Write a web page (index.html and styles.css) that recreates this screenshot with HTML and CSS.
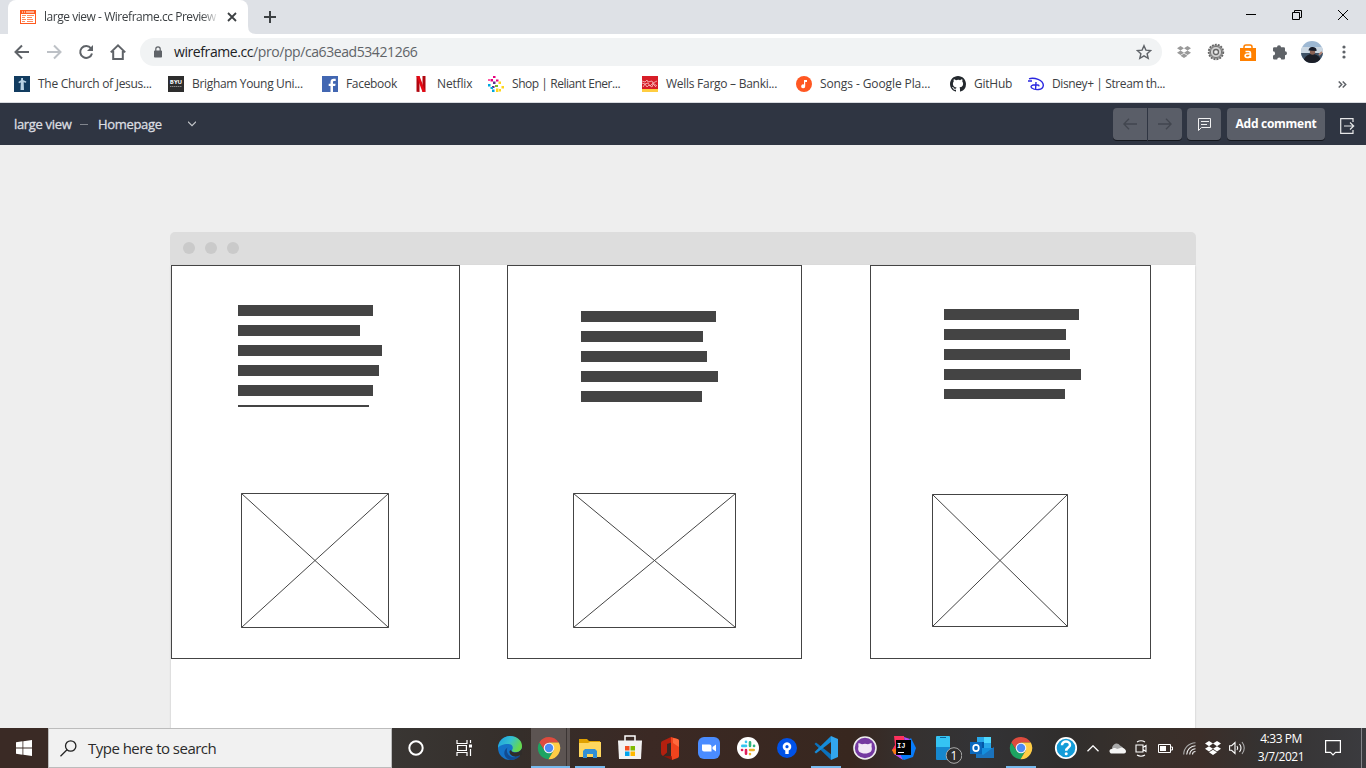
FILE: index.html
```html
<!DOCTYPE html>
<html lang="en">
<head>
<meta charset="utf-8">
<title>large view - Wireframe.cc Preview</title>
<link rel="stylesheet" href="styles.css">
</head>
<body>
<svg class="defs" width="0" height="0" aria-hidden="true">
  <symbol id="chrome" viewBox="0 0 24 24">
    <path fill="#dd4b3e" d="M12 6.600h9.700A11.200 11.200 0 0 0 2.300 6.400l5.200 8.300z"/>
    <path fill="#1da462" d="M2.300 6.400a11.200 11.200 0 0 0 9.200 16.800l5-8.500-8.900 0z"/>
    <path fill="#ffcd46" d="M21.800 6.600H12l4.700 8-5.200 8.600A11.200 11.200 0 0 0 21.800 6.600z"/>
    <circle cx="12" cy="12" r="5.300" fill="#f4f4f4"/><circle cx="12" cy="12" r="4.200" fill="#4c8bf5"/>
  </symbol>
  <symbol id="dropbox" viewBox="0 0 16 14">
    <path d="M4 0 8 2.600 4 5.200 0 2.600zM12 0l4 2.600-4 2.600-4-2.600zM4 5.200l4 2.600-4 2.600-4-2.600zM12 5.200l4 2.600-4 2.600-4-2.600zM8 8.700l4 2.600L8 13.900l-4-2.600z"/>
  </symbol>
</svg>

<header class="tabs">
  <div class="tab">
    <svg width="16" height="14" viewBox="0 0 16 14"><path fill="#ff5a1f" d="M0 0h16v14H0z"/><path fill="#fff" d="M1 4h14v9H1zM2 1.500h1v1H2zM4 1.500h1v1H4zM6 1.500h8v1H6z"/><path stroke="#ff8a5c" d="M2 5.500h4M7 5.500h7M2 7.500h3M7 7.500h5M2 9.500h4M7 9.500h6M2 11.500h3M7 11.500h6"/></svg>
    <span class="tab-title">large view - Wireframe.cc Preview</span>
    <svg width="10" height="10" viewBox="0 0 10 10" stroke="#3c4043" stroke-width="1.800"><path d="m1 1 8 8M9 1 1 9"/></svg>
  </div>
  <svg class="tab-foot" width="8" height="8" viewBox="0 0 8 8"><path fill="#fff" d="M0 0v8h8Q0 8 0 0z"/></svg>
  <svg class="new-tab" width="12" height="12" viewBox="0 0 12 12" stroke="#3c4043" stroke-width="2"><path d="M6 0v12M0 6h12"/></svg>
  <div class="window-controls">
    <svg width="10" height="11" viewBox="0 0 10 11" stroke="#000"><path d="M0 5.500h10"/></svg>
    <svg width="10" height="10" viewBox="0 0 10 10" fill="none" stroke="#000"><path d="M.5 2.500h7v7h-7zM2.500 2V.5h7v7H8"/></svg>
    <svg width="10" height="10" viewBox="0 0 10 10" stroke="#000"><path d="m0 0 10 10M10 0 0 10"/></svg>
  </div>
</header>

<nav class="toolbar">
  <div class="nav-icons">
    <svg width="16" height="16" viewBox="0 0 16 16" fill="none" stroke="#5f6368" stroke-width="2"><path d="M15 8H2.500M8 1.500 1.500 8 8 14.500"/></svg>
    <svg width="16" height="16" viewBox="0 0 16 16" fill="none" stroke="#bdc1c6" stroke-width="2"><path d="M1 8h12.500M8 1.500 14.500 8 8 14.500"/></svg>
    <svg width="16" height="16" viewBox="0 0 16 16" fill="none" stroke="#5f6368" stroke-width="2"><path d="M13 4.300A6 6 0 1 0 14 9.500"/><path fill="#5f6368" stroke="none" d="M15 1v6H9z"/></svg>
    <svg width="16" height="16" viewBox="0 0 16 16" fill="none" stroke="#5f6368" stroke-width="2"><path d="M.8 8.400 8 1.400l7.200 7M3.200 7v8h9.600V7"/></svg>
  </div>
  <div class="address">
    <svg class="lock" width="8" height="12" viewBox="0 0 8 12"><path fill="#5f6368" d="M.8 4.500h6.400a.8.800 0 0 1 .8.800v5.400a.8.800 0 0 1-.8.800H.800a.8.800 0 0 1-.8-.8V5.300a.8.800 0 0 1 .8-.8z"/><path fill="none" stroke="#5f6368" stroke-width="1.200" d="M1.800 5V3a2.200 2.200 0 0 1 4.400 0v2"/></svg>
    <span class="url">wireframe.cc<span class="path">/pro/pp/ca63ead53421266</span></span>
    <svg class="star" width="16" height="16" viewBox="0 0 16 16" fill="none" stroke="#5f6368" stroke-width="1.400"><path d="m8 1.700 1.900 4.400 4.800.4-3.600 3.200 1.100 4.700L8 11.900l-4.200 2.500 1.100-4.700L1.300 6.500l4.800-.4z"/></svg>
  </div>
  <div class="extensions">
    <span><svg width="14" height="14" fill="#999"><use href="#dropbox"/></svg></span>
    <span><svg width="18" height="18" viewBox="0 0 18 18"><circle cx="9" cy="9" r="7.300" fill="#aaa" stroke="#666" stroke-width="1.800" stroke-dasharray="1.900 1.100"/><circle cx="9" cy="9" r="5.600" fill="#d0d0d0" stroke="#777"/><circle cx="9" cy="9" r="2.500" fill="#eee" stroke="#666" stroke-width="1.300"/></svg></span>
    <span><svg width="16" height="17" viewBox="0 0 16 17"><path fill="#ff8000" d="M0 4h16v13H0z"/><path fill="none" stroke="#ff8000" stroke-width="1.500" d="M4 5V3q0-2 2-2h4q2 0 2 2v2"/><path fill="none" stroke="#fff" stroke-width="1.700" d="M5.500 7.500h3.400q1.500 0 1.500 1.500v5M10 10H7.200C4.500 10 4.500 13.500 7 13.500c2 0 3.200-1 3.200-2"/></svg></span>
    <span><svg width="16" height="16" viewBox="0 0 16 16"><path fill="#5f6368" d="M5 3.200a2 2 0 1 1 4 0h2.800A1.200 1.200 0 0 1 13 4.400v2.900a2 2 0 1 1 0 4v2.900a1.300 1.300 0 0 1-1.300 1.300H9.200a2 2 0 0 0-4 0H2.300A1.300 1.300 0 0 1 1 14.200v-2.700a2.100 2.100 0 0 0 0-4.200V4.400a1.200 1.200 0 0 1 1.200-1.200z"/></svg></span>
    <span><svg width="22" height="22" viewBox="0 0 22 22"><defs><clipPath id="av"><circle cx="11" cy="11" r="11"/></clipPath></defs><g clip-path="url(#av)"><path fill="#9db8d3" d="M0 0h22v22H0z"/><path fill="#cbd7e2" d="M0 6h22v6H0z"/><path fill="#3f5266" d="M0 12h22v10H0z"/><path fill="#1b1e27" d="M3 22v-4q3-5 8-5t8 4l1 5z"/><circle cx="11.500" cy="11" r="2.700" fill="#8a6254"/><path fill="#171b28" d="M7.500 9.500Q8 5.500 12 6t3.500 4z"/><path stroke="#b58676" stroke-width="2" d="m18 14 3-3"/></g></svg></span>
    <span><svg width="4" height="14" viewBox="0 0 4 14" fill="#5f6368"><circle cx="2" cy="2" r="1.600"/><circle cx="2" cy="7" r="1.600"/><circle cx="2" cy="12" r="1.600"/></svg></span>
  </div>
</nav>

<nav class="bookmarks">
  <a class="bm church"><svg width="16" height="16" viewBox="0 0 16 16"><path fill="#123c60" d="M0 0h16v16H0z"/><path fill="#b9d2e4" d="M7.200 2H9v2l3.300 1.500-.3 1.300-2.300-.5.3 7.700H6.500l.3-7.500-1.700.8-.8-1.200L7 4.200z"/></svg><span>The Church of Jesus...</span></a>
  <a class="bm brigham"><svg width="16" height="16" viewBox="0 0 16 16"><path fill="#2d2d2d" d="M0 0h16v16H0z"/><text class="byu" x="8" y="8" text-anchor="middle">BYU</text><path stroke="#888" stroke-dasharray="1.500 .5" d="M2 10.500h12"/></svg><span>Brigham Young Uni...</span></a>
  <a class="bm facebook"><svg width="16" height="16" viewBox="0 0 16 16"><path fill="#4267b2" d="M0 0h16v16H0z"/><path fill="#fff" d="M8.500 16v-6H6.700V7.700h1.800V6c0-2.200 1.300-3.200 3.200-3.200h2V5h-1.300C11.300 5 11 5.500 11 6.300v1.400h2.600l-.4 2.300H11v6z"/></svg><span>Facebook</span></a>
  <a class="bm netflix"><svg width="16" height="16" viewBox="0 0 16 16"><path fill="#b1060f" d="M3.500 0h3v16l-3-.2zM9.500 0h3v15.800L9.500 16z"/><path fill="#e50914" d="M3.500 0h3l6 15.800-3 .2z"/></svg><span>Netflix</span></a>
  <a class="bm reliant"><svg width="16" height="16" viewBox="0 0 16 16"><path fill="#e6007e" d="M5 0h2.500v2H5zM2.500 3H5v2.500H2.500zM8 3.500h2.500v2H8z"/><path fill="#ff5aa5" d="M0 3h2v2H0z"/><path fill="#5b2d90" d="M5 5.500h2.500V8H5zM4 10h2.500v2H4z"/><path fill="#ffd51c" d="M10.500 5.500H13V8h-2.500zM13.500 10H16v2.500h-2.500zM8 12.500h2.500V16H8zM11 13h2v2.500h-2z"/><path fill="#00a8df" d="M0 8h2.500v2.500H0zM2.500 11H5v2H2.500zM4 13.500h2.500V16H4z"/><path fill="#7ab82c" d="M7 9h3v2H7z"/></svg><span>Shop | Reliant Ener...</span></a>
  <a class="bm wells"><svg width="16" height="16" viewBox="0 0 16 16"><path fill="#d71e28" d="M0 0h16v13H0z"/><path fill="#ffcd41" d="M0 13h16v3H0z"/><path fill="none" stroke="#f2b1b2" stroke-width=".9" d="m0 5 3 1 2-2 1 2 4-1 1 2 4-2M0 7l3 1 3-1 2 3 3-3 4 3M1 11l2-3 2 3 2-2 3 2 1-3 3 3"/></svg><span>Wells Fargo – Banki...</span></a>
  <a class="bm songs"><svg width="16" height="16" viewBox="0 0 16 16"><circle cx="8" cy="8" r="8" fill="#ff5722"/><path fill="#fff" d="M8 4h3v2H9.200v4.200A2 2 0 1 1 8 8.500z"/></svg><span>Songs - Google Pla...</span></a>
  <a class="bm github"><svg width="16" height="16" viewBox="0 0 16 16"><path fill="#24292e" d="M8 0C3.580 0 0 3.580 0 8c0 3.540 2.290 6.530 5.470 7.590.4.070.55-.17.55-.38 0-.19-.01-.82-.01-1.490-2.010.37-2.530-.49-2.690-.94-.09-.23-.48-.94-.82-1.130-.28-.15-.68-.52-.01-.53.63-.01 1.080.58 1.230.82.72 1.210 1.870.87 2.330.66.070-.52.28-.87.51-1.070-1.780-.2-3.640-.89-3.640-3.950 0-.87.31-1.590.82-2.150-.08-.2-.36-1.020.08-2.120 0 0 .67-.21 2.200.82A7.600 7.600 0 0 1 8 3.860c.68 0 1.360.09 2 .27 1.530-1.040 2.200-.82 2.200-.82.44 1.100.16 1.920.08 2.120.51.56.82 1.270.82 2.150 0 3.070-1.870 3.750-3.650 3.950.29.25.54.73.54 1.480 0 1.070-.01 1.930-.01 2.200 0 .21.15.46.55.38A8 8 0 0 0 16 8c0-4.420-3.580-8-8-8z"/></svg><span>GitHub</span></a>
  <a class="bm disney"><svg width="16" height="16" viewBox="0 0 16 16" fill="none" stroke="#2a27e0" stroke-width="1.400"><path d="M0 5h4M1 2.800C6 1 15.500 4 15.300 9.500 15 14.500 7 14.500 3.800 12c-2-1.800.2-3 3.700-3.200 3-.1 4 .6 3 1.400M8 6 7.600 13"/></svg><span>Disney+ | Stream th...</span></a>
  <svg class="more" width="9" height="7" viewBox="0 0 9 7" fill="none" stroke="#5f6368" stroke-width="1.500"><path d="m.7.500 3 3-3 3M4.700.500l3 3-3 3"/></svg>
</nav>

<div class="appbar">
  <span class="project">large view</span>
  <span class="dash"></span>
  <span class="page-name">Homepage</span>
  <svg class="caret" width="8" height="6" viewBox="0 0 8 6" fill="none" stroke="#c8cacd" stroke-width="1.100"><path d="m0 .7 4 4 4-4"/></svg>
  <div class="actions">
    <button class="btn prev"><svg width="14" height="12" viewBox="0 0 14 12" fill="none" stroke="#42464f" stroke-width="1.300"><path d="M14 6H1M6 .7.800 6 6 11.300"/></svg></button>
    <button class="btn next"><svg width="14" height="12" viewBox="0 0 14 12" fill="none" stroke="#42464f" stroke-width="1.300"><path d="M0 6h13M8 .7 13.200 6 8 11.300"/></svg></button>
    <button class="btn notes"><svg width="13" height="13" viewBox="0 0 13 13" fill="none" stroke="#f0f0f1"><path d="M.5.500h12v9h-9l-3 3zM3 3.500h8M3 6.500h6"/></svg></button>
    <button class="btn add">Add comment</button>
    <svg class="exit" width="15" height="16" viewBox="0 0 15 16" fill="none" stroke="#e6e7e8" stroke-width="1.200"><path d="M13 4V.7H.7v14.600H13V12M4 8h9.500M10 4.500 13.700 8 10 11.500"/></svg>
  </div>
</div>

<main class="stage">
  <div class="mock">
    <div class="mock-head"><i></i><i></i><i></i></div>
    <div class="mock-page">
      <section class="frame f1">
        <div class="lines"><b style="width:135px"></b><b style="width:122px"></b><b style="width:144px"></b><b style="width:141px"></b><b style="width:135px"></b><b style="width:131px"></b></div>
        <svg class="placeholder" width="148" height="135" viewBox="0 0 148 135"><path d="M.5.500h147v134H.500zM.5.500l147 134M147.500.500.500 134.500"/></svg>
      </section>
      <section class="frame f2">
        <div class="lines"><b style="width:135px"></b><b style="width:122px"></b><b style="width:126px"></b><b style="width:137px"></b><b style="width:121px"></b></div>
        <svg class="placeholder" width="163" height="135" viewBox="0 0 163 135"><path d="M.5.500h162v134H.500zM.5.500l162 134M162.500.500.500 134.500"/></svg>
      </section>
      <section class="frame f3">
        <div class="lines"><b style="width:135px"></b><b style="width:122px"></b><b style="width:126px"></b><b style="width:137px"></b><b style="width:121px"></b></div>
        <svg class="placeholder" width="136" height="133" viewBox="0 0 136 133"><path d="M.5.500h135v132H.500zM.5.500l135 132M135.500.500.500 132.500"/></svg>
      </section>
    </div>
  </div>
</main>

<footer class="taskbar">
  <div class="cell start"><svg width="16" height="16" viewBox="0 0 16 16" fill="#fff"><path d="m0 2.200 6.500-.9v6.300H0zM7.300 1.200 16 0v7.600H7.300zM0 8.400h6.500v6.300L0 13.800zM7.300 8.400H16V16l-8.700-1.200z"/></svg></div>
  <div class="search"><svg width="17" height="17" viewBox="0 0 17 17" fill="none" stroke="#222" stroke-width="1.300"><circle cx="10.700" cy="6" r="5.200"/><path d="M7 9.800.5 16.300"/></svg><span>Type here to search</span></div>
  <div class="cell wide"><svg width="16" height="16" viewBox="0 0 16 16"><circle cx="8" cy="8" r="6.700" fill="none" stroke="#fff" stroke-width="2"/></svg></div>
  <div class="cell wide"><svg width="17" height="16" viewBox="0 0 17 16" fill="none" stroke="#fff" stroke-width="1.200"><path d="M1 0v3.500h10V0M1.600 5.500h8.800v5H1.600zM1 16v-3.500h10V16M14.500 0v3M14.500 9v7"/><path fill="#fff" stroke="none" d="M13 4.500h3v3h-3z"/></svg></div>
  <div class="cell edge"><svg width="24" height="24" viewBox="0 0 24 24"><defs><linearGradient id="eg" x1="0" y1="0" x2="1" y2=".4"><stop offset="0" stop-color="#1b9de2"/><stop offset=".55" stop-color="#35c1d0"/><stop offset="1" stop-color="#66d84c"/></linearGradient></defs><circle cx="12" cy="12" r="12" fill="#1473c8"/><path fill="#302c2a" d="M13 14c0 1.500 2 2.500 4 2.500 3 0 5-1.500 7-4.500v6.500l-3 1.500c-5 2-10-1-9.500-5z"/><path fill="url(#eg)" d="M0 12C0 5 5.500 0 12 0c7 0 12 4.500 12 10 0 4-3 6-6.500 6-2 0-4-.7-3.500-2 1.800-2.500.5-6-4-6C5 8 1 10 0 12z"/><path fill="#124b91" d="M9.500 11.500c-2 4 1 9.700 6.500 9.700 2 0 3.800-.7 5.500-2 .5 0 .7.500.3 1C20 22.500 16 24 12.500 24 6 23 4 15 9.500 11.500z"/></svg></div>
  <div class="cell active running"><svg width="24" height="24"><use href="#chrome"/></svg></div>
  <div class="cell explorer"><svg width="22" height="19" viewBox="0 0 22 19"><path fill="#e0a100" d="M0 0h8l2 2h11v5H0z"/><path fill="#ffd75e" d="M0 4h9l2-1h11v15H0z"/><path fill="#3290d6" d="M4 19v-7l2-2h10l2 2v7h-4v-4H8v4z"/></svg></div>
  <div class="cell store"><svg width="24" height="24" viewBox="0 0 24 24"><path fill="none" stroke="#fff" stroke-width="1.500" d="M7 6V1h10v5"/><path fill="#f2f2f2" d="M0 5.500h24L23 24H1z"/><path fill="#f25022" d="M7 11h4.500v4.500H7z"/><path fill="#7fba00" d="M12.500 11H17v4.500h-4.500z"/><path fill="#00a4ef" d="M7 16.500h4.500V21H7z"/><path fill="#ffb900" d="M12.500 16.500H17V21h-4.500z"/></svg></div>
  <div class="cell"><svg width="18" height="23" viewBox="0 0 18 23"><path fill="#b3200f" d="M0 6q0-1.500 1.500-2L10 0l2 5-6 2v8.500L2 19q-2-1-2-3z"/><path fill="#f0431d" d="m10 0 6.500 2Q18 2.500 18 4v15q0 1.500-1.500 2L11 23l-1-3z"/><path fill="#ff6a3c" d="m12 1 4.500 1Q18 2.500 18 4v6l-6-4z"/><path fill="#8f160a" d="m2.500 19.300 8-.3.500 4z"/></svg></div>
  <div class="cell"><svg width="22" height="22" viewBox="0 0 22 22"><rect width="22" height="22" rx="6" fill="#4a8cff"/><path fill="#fff" d="M4 7.500h7.500q2 0 2 2v5H6q-2 0-2-2zM14.500 10l3.500-2.500v7L14.500 12z"/></svg></div>
  <div class="cell"><svg width="22" height="22" viewBox="0 0 22 22" fill="none" stroke-width="2.600" stroke-linecap="round"><circle cx="11" cy="11" r="11" fill="#fff"/><path stroke="#36c5f0" d="M9 4.800v.1M5.300 8.900H9"/><path stroke="#2eb67d" d="M13 5.200v3.700M17 8.900h.1"/><path stroke="#e01e5a" d="M9 13v3.700M5 13h.1"/><path stroke="#ecb22e" d="M13 13h3.700M13 17v.1"/></svg></div>
  <div class="cell"><svg width="20" height="20" viewBox="0 0 20 20"><circle cx="10" cy="10" r="10" fill="#0052e8"/><path fill="#fff" d="M8.300 12.500A4.300 4.300 0 1 1 11.700 12.500V16H8.300z"/><circle cx="10" cy="8.700" r="1.600" fill="#0052e8"/></svg></div>
  <div class="cell vscode"><svg width="24" height="24" viewBox="0 0 24 24"><path fill="#0b72bd" d="m2 6.500 15 11.700V24L.500 8z"/><path fill="#168bd8" d="M17 0v6L2 17.500.500 16z"/><path fill="#32a6ee" d="m17 0 7 3v18l-7 3z"/></svg></div>
  <div class="cell"><svg width="24" height="24" viewBox="0 0 24 24"><circle cx="12" cy="12" r="11" fill="#7439a1" stroke="#eee" stroke-width="1.600"/><path fill="#f1e8f6" d="M5.500 7 9 8.200q3-.8 6 0L18.500 7q.4 2 0 3.500c1.500 5-2 7-6.500 7s-8-2-6.500-7q-.4-1.500 0-3.500z"/></svg></div>
  <div class="cell"><svg width="24" height="24" viewBox="0 0 24 24"><path fill="#fe315d" d="M2 0h10l1 10-9 9-4-5 3-5z"/><path fill="#f97a12" d="m0 14 5-2 2 9-5-3z"/><path fill="#087cfa" d="m14 6 5-4 5 10-3 9-9 3-5-3z"/><path fill="#b74af7" d="m12 1 6 2-5 4zM2 18l6 0 3 6z"/><path d="M4 4h15v15H4z"/><text class="ij" x="5" y="11.500">IJ</text><path fill="#fff" d="M6 16h6v1H6z"/></svg></div>
  <div class="cell phone"><svg width="26" height="28" viewBox="0 0 26 28"><path fill="#35c3f3" d="M0 1q0-1 1-1h12q1 0 1 1v11H0z"/><path fill="#1688cf" d="M0 11h14v13H1q-1 0-1-1z"/><path stroke="#0c6299" d="M4 1.500h6"/><circle cx="18" cy="19.500" r="7.800" fill="#302e2e" stroke="#aaa"/><text class="badge" x="18" y="24" text-anchor="middle">1</text></svg></div>
  <div class="cell"><svg width="24" height="22" viewBox="0 0 24 22"><path fill="#28a8ea" d="M7 0h14v11H7z"/><path fill="#0358a7" d="M7 5h7v7H7z"/><path fill="#50d9ff" d="M14 0h7v6h-7z"/><path fill="#1490df" d="M6 11h18v10H6z"/><path fill="#1b73bd" d="m24 10-11 8-7-5v8h18z"/><path fill="#0a68bd" d="M0 5h12v12H0z"/><ellipse cx="6" cy="11" rx="2.800" ry="3.200" fill="none" stroke="#fff" stroke-width="1.700"/></svg></div>
  <div class="cell running"><svg width="24" height="24"><use href="#chrome"/></svg></div>
  <div class="cell help"><svg width="24" height="24" viewBox="0 0 24 24"><circle cx="12" cy="12" r="10.200" fill="#139cd8" stroke="#fff" stroke-width="1.800"/><path fill="none" stroke="#fff" stroke-width="2.500" d="M8 9.200c0-5 8-4.500 8-.3 0 2.600-3.800 2.500-3.800 5.800"/><circle cx="12.200" cy="17.700" r="1.500" fill="#fff"/></svg></div>
  <div class="cell tray"><svg width="12" height="7" viewBox="0 0 12 7" fill="none" stroke="#fff" stroke-width="1.300"><path d="m.5 6.300 5.500-5.500 5.500 5.500"/></svg></div>
  <div class="cell tray"><svg width="17" height="11" viewBox="0 0 17 11"><path fill="#aaa" d="M3 5C4 0 9-1 11 2.500l3 2L8 8z"/><path fill="#f5f5f5" d="M3 10.500C0 10.500-.500 6.500 2.500 6 4 4.500 7 5 8 6l5-1.500q4 1.500 4 4 0 2-2 2z"/></svg></div>
  <div class="cell tray"><svg width="12" height="17" viewBox="0 0 12 17" fill="none" stroke="#fff" stroke-width="1.100"><path d="M1 5h7v7H1zM8 7.500l3-2v6l-3-2M2 2q4-2.500 8 0M2 15q4 2.500 8 0"/></svg></div>
  <div class="cell tray"><svg width="15" height="9" viewBox="0 0 15 9"><path fill="none" stroke="#fff" d="M.5.500h12v8H.500zM13 3h1.500v3H13"/><path fill="#fff" d="M2 2h6v5H2z"/></svg></div>
  <div class="cell tray"><svg width="13" height="13" viewBox="0 0 13 13" fill="none" stroke="#eee" stroke-width="1.100"><path stroke="#aaa" d="M.7 12.500A12 12 0 0 1 12.500.7"/><path d="M3.700 12.500a9 9 0 0 1 8.800-8.800M6.700 12.500a6 6 0 0 1 5.800-5.800M9.500 12.500a3 3 0 0 1 3-3"/></svg></div>
  <div class="cell tray"><svg width="16" height="14" fill="#fff"><use href="#dropbox"/></svg></div>
  <div class="cell tray"><svg width="16" height="14" viewBox="0 0 16 14" fill="none" stroke="#fff" stroke-width="1.100"><path d="M.6 4.700h2L6 1.500v11L2.600 9.300h-2zM8 5q1.500 2 0 4M10.500 3q3 4 0 8"/><path stroke="#aaa" d="M13 1q4.500 6 0 12"/></svg></div>
  <div class="clock"><span>4:33 PM</span><span>3/7/2021</span></div>
  <div class="cell action"><svg width="16" height="16" viewBox="0 0 16 16" fill="none" stroke="#fff" stroke-width="1.200"><path d="M.6.600h14.800v11.800h-4.900L8 15l-2.500-2.600H.600z"/></svg></div>
  <div class="peek"></div>
</footer>
</body>
</html>
```
FILE: styles.css
```css
* { box-sizing: border-box; }
body {
  margin: 0;
  width: 1366px;
  height: 768px;
  overflow: hidden;
  display: flex;
  flex-direction: column;
  font: 12px/16px "Open Sans", "Noto Sans", sans-serif;
  color: #3c4043;
  white-space: nowrap;
}
svg { display: block; flex: none; }
.defs { height: 0; overflow: hidden; position: absolute; }

.tabs { flex: none; height: 34px; background: #dee1e6; display: flex; align-items: center; padding-left: 8px; }
.tab {
  width: 240px; height: 34px; padding: 0 11px 0 12px;
  display: flex; align-items: center; gap: 8px;
  background: #fff; border-radius: 8px 8px 0 0;
}
.tab-title {
  width: 175px; letter-spacing: -.46px;
  -webkit-mask-image: linear-gradient(90deg, #000 90%, transparent);
  mask-image: linear-gradient(90deg, #000 90%, transparent);
}
.tab-foot { align-self: flex-end; }
.new-tab { margin-left: 8px; }
.window-controls { margin-left: auto; display: flex; gap: 36px; align-items: center; padding: 0 18px 5px 0; }

.toolbar { flex: none; height: 36px; background: #fff; display: flex; align-items: center; }
.nav-icons { display: flex; gap: 16px; padding-left: 14px; width: 140px; }
.address { width: 1022px; height: 28px; border-radius: 14px; background: #f1f3f4; display: flex; align-items: center; padding: 0 10px 0 14px; }
.url { margin-left: 12px; font-size: 14px; line-height: 20px; color: #202124; letter-spacing: -.42px; }
.path { color: #5f6368; }
.star { margin-left: auto; }
.extensions { display: flex; padding-left: 6px; }
.extensions span { width: 32px; height: 24px; display: flex; align-items: center; justify-content: center; }

.bookmarks { flex: none; height: 33px; background: #fff; border-bottom: 1px solid #d8dadf; padding: 0 19px 4px 14px; display: flex; align-items: center; }
.bm { width: 154px; display: flex; align-items: center; gap: 8px; }
.church { letter-spacing: -.28px; }
.brigham { letter-spacing: -.33px; }
.facebook { width: 91px; letter-spacing: -.32px; }
.netflix { width: 75px; letter-spacing: -.15px; }
.reliant { letter-spacing: -.45px; }
.wells { letter-spacing: -.27px; }
.songs { letter-spacing: -.1px; }
.github { width: 78px; letter-spacing: -.25px; }
.disney { letter-spacing: -.4px; }
.more { margin-left: auto; }
.byu { font: bold 6px "Open Sans", sans-serif; letter-spacing: 0; fill: #fff; }

.appbar { flex: none; height: 42px; background: #2f3542; color: #dcdee1; display: flex; align-items: center; padding: 0 11px 0 14px; font-size: 13px; -webkit-text-stroke: .3px #dcdee1; }
.project { width: 58px; letter-spacing: -.33px; }
.dash { width: 8px; height: 1px; margin: 0 10px 0 8px; background: #81858d; }
.page-name { width: 64px; letter-spacing: -.33px; }
.caret { margin-left: 26px; }
.actions { margin-left: auto; display: flex; align-items: center; -webkit-text-stroke: 0; }
.btn {
  border: 0; padding: 0; height: 32px; width: 34px; border-radius: 4px;
  display: flex; align-items: center; justify-content: center;
  background: #5a5e68; box-shadow: 0 1px 0 #15181e; color: #fff;
  font: bold 12px/16px "Open Sans", sans-serif;
}
.prev { border-radius: 4px 0 0 4px; margin-right: 1px; }
.next { border-radius: 0 4px 4px 0; }
.notes { margin: 0 6px 0 5px; }
.add { width: 98px; letter-spacing: -.28px; }
.exit { margin: 3px 0 0 15px; }

.stage { flex: none; height: 583px; background: #eee; padding-top: 87px; display: flex; justify-content: center; overflow: hidden; }
.mock { width: 1026px; }
.mock-head { height: 33px; background: #ddd; border-radius: 5px 5px 0 0; display: flex; align-items: center; gap: 10px; padding: 0 13px 1px; }
.mock-head i { width: 12px; height: 12px; border-radius: 50%; background: #cacaca; }
.mock-page { width: 1024px; height: 480px; margin: 0 auto; background: #fff; box-shadow: 0 1px 2px rgba(0,0,0,.2); display: flex; align-items: flex-start; }
.frame { height: 394px; border: 1px solid #444; }
.f1 { width: 289px; padding: 39px 0 0 66px; }
.f2 { width: 295px; margin-left: 47px; padding: 45px 0 0 73px; }
.f3 { width: 281px; margin-left: 68px; padding: 43px 0 0 73px; }
.lines { display: flex; flex-direction: column; gap: 9px; height: 91px; overflow: hidden; }
.lines b { flex: none; height: 11px; background: #444; }
.f1 .lines { height: 102px; }
.f3 .lines { height: 90px; }
.placeholder { fill: none; stroke: #444; }
.f1 .placeholder { margin: 86px 0 0 3px; }
.f2 .placeholder { margin: 91px 0 0 -8px; }
.f3 .placeholder { margin: 95px 0 0 -12px; }

.taskbar { flex: none; height: 40px; display: flex; background: linear-gradient(90deg, #3a2a25 0, #3a2a25 48px, #393633 392px, #352e2a 520px, #3b2924 650px, #38271f 850px, #353130 915px, #333336 980px, #302e2d 1060px, #38302b 1140px, #3b2e29 1200px, #353231 1260px, #3b3b3f 1366px); }
.cell { flex: none; width: 39px; height: 40px; display: flex; align-items: center; justify-content: center; }
.start { width: 48px; }
.search { width: 344px; border: 1px solid #bcbcbc; background: #f1f1f1; display: flex; align-items: center; padding-left: 11px; gap: 11px; font-size: 15px; line-height: 20px; letter-spacing: -.52px; color: #2b2b2b; }
.wide { width: 48px; }
.edge { width: 43px; }
.active { background: linear-gradient(90deg, #5c5452 35px, #3b3534 35px, #3b3534 36px, #5c5452 36px); padding-right: 3px; }
.running { box-shadow: inset 0 -2px #76b9ed; }
.explorer { width: 40px; padding: 0 5px; background: linear-gradient(#76b9ed, #76b9ed) bottom / 30px 2px no-repeat; }
.vscode { background: linear-gradient(#76b9ed, #76b9ed) bottom / 30px 2px no-repeat; }
.running:not(.active) { box-shadow: none; background: linear-gradient(#76b9ed, #76b9ed) bottom / 30px 2px no-repeat; }
.store { width: 40px; padding-bottom: 2px; }
.phone { padding: 4px 0 0 12px; }
.help { width: 41px; padding-left: 11px; }
.tray { width: 24px; }
.ij { font: bold 7px "Liberation Mono", monospace; fill: #fff; }
.badge { font: 12px "Open Sans", sans-serif; fill: #fff; }
.clock { width: 64px; display: flex; flex-direction: column; align-items: center; padding-top: 2px; line-height: 18px; color: #fff; letter-spacing: -.45px; }
.action { width: 40px; }
.peek { width: 1px; margin-left: 8px; background: #85858a; }
```
